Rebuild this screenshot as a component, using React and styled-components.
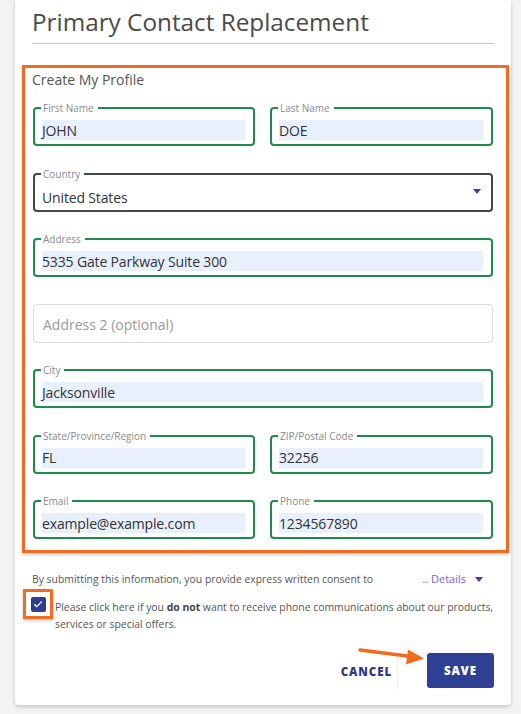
import React from 'react';
import styled, { createGlobalStyle } from 'styled-components';

const GlobalStyle = createGlobalStyle`
  html, body {
    margin: 0;
    padding: 0;
    background: #f3f3f3;
    font-family: "Open Sans", "Liberation Sans", sans-serif;
  }
`;

const Page = styled.div`
  width: 521px;
  height: 714px;
  overflow: hidden;
`;

const Card = styled.div`
  position: relative;
  margin-left: 15px;
  width: 496px;
  height: 705px;
  box-sizing: border-box;
  padding: 4px 17px 0;
  background: #fff;
  border-radius: 0 0 4px 4px;
  box-shadow: 0 2px 4px rgba(0, 0, 0, 0.18);
`;

const Title = styled.h1`
  margin: 0;
  font-size: 24.3px;
  font-weight: 400;
  line-height: 36px;
  color: #4a4a4a;
  padding-bottom: 3px;
  border-bottom: 1px solid #c8c8c8;
`;

const Highlight = styled.section`
  margin: 21px -15px 0 -10px;
  padding: 2px 13px 11px 8px;
  border: 3px solid #f36b21;
  box-shadow: 0 2px 3px rgba(0, 0, 0, 0.2);
`;

const SectionTitle = styled.div`
  font-size: 14px;
  line-height: 20px;
  color: #555;
  margin-bottom: 17px;
  margin-left: -1px;
`;

const Grid = styled.div`
  display: grid;
  grid-template-columns: 222px 223px;
  column-gap: 15px;
  row-gap: 26.5px;
`;

const Field = styled.div`
  position: relative;
  grid-column: ${p => (p.$full ? '1 / -1' : 'auto')};
  height: 39px;
  box-sizing: border-box;
  border: ${p =>
    p.$tone === 'dark' ? '2px solid #454545' : p.$tone === 'empty' ? '1px solid #dcdcdc' : '2px solid #1e8b4c'};
  border-radius: 4px;
  padding: ${p => (p.$tone === 'empty' ? '0 9px' : '11px 8px 4px 7px')};
  display: flex;
  align-items: ${p => (p.$tone === 'empty' ? 'center' : 'stretch')};
`;

const Label = styled.span`
  position: absolute;
  top: -8px;
  left: 6px;
  padding: 0 4px 0 2px;
  background: #fff;
  font-size: 10px;
  line-height: 14px;
  color: #8a8a8a;
`;

const Value = styled.div`
  flex: 1;
  display: flex;
  align-items: center;
  background: ${p => (p.$filled ? '#e8f0fe' : 'transparent')};
  font-size: 14px;
  letter-spacing: -0.15px;
  color: #333;
  padding-left: 0;
  margin-top: ${p => (p.$filled ? '0' : '3px')};
`;

const Placeholder = styled.div`
  font-size: 14px;
  color: #9a9a9a;
  margin-top: 2px;
`;

const Caret = styled.span`
  position: absolute;
  right: 10px;
  top: 14px;
  width: 0;
  height: 0;
  border-left: 4.5px solid transparent;
  border-right: 4.5px solid transparent;
  border-top: 5px solid #4a3aa8;
`;

const ConsentRow = styled.div`
  display: flex;
  justify-content: space-between;
  align-items: center;
  margin-top: 18px;
  font-size: 10.4px;
  line-height: 16px;
  color: #555;
`;

const Details = styled.span`
  display: flex;
  align-items: center;
  gap: 9px;
  font-size: 11px;
  color: #7a5fd0;
  margin-right: 11px;
  &::after {
    content: '';
    border-left: 4.5px solid transparent;
    border-right: 4.5px solid transparent;
    border-top: 5px solid #4a3aa8;
  }
`;

const OptRow = styled.div`
  display: flex;
  align-items: flex-start;
  margin-top: 2px;
  margin-left: -9px;
`;

const BoxMark = styled.div`
  flex: none;
  width: 24px;
  height: 24px;
  border: 3px solid #f36b21;
  display: flex;
  align-items: center;
  justify-content: center;
  box-shadow: 0 2px 3px rgba(0, 0, 0, 0.2);
  margin-right: 2px;
`;

const Check = styled.div`
  width: 15px;
  height: 15px;
  border-radius: 2px;
  background: #2e3c92;
  display: flex;
  align-items: center;
  justify-content: center;
`;

const OptText = styled.p`
  margin: 10px 0 0;
  font-size: 10.4px;
  line-height: 17px;
  color: #555;
  b {
    font-weight: 700;
    color: #444;
  }
`;

const Actions = styled.div`
  position: relative;
  display: flex;
  justify-content: flex-end;
  align-items: center;
  margin-top: 18px;
`;

const CancelButton = styled.button`
  border: none;
  border-right: 1px solid #f0f0f0;
  background: transparent;
  font-family: inherit;
  font-size: 11.5px;
  font-weight: 800;
  letter-spacing: 0.9px;
  color: #2c3a8a;
  height: 35px;
  padding: 0 5px 0 0;
  margin-right: 29px;
  margin-top: 3px;
`;

const SaveButton = styled.button`
  width: 67px;
  height: 35px;
  border: none;
  border-radius: 3px;
  background: #2e3f94;
  color: #fff;
  font-family: inherit;
  font-size: 11.5px;
  font-weight: 800;
  letter-spacing: 0.9px;
`;

const Arrow = styled.svg`
  position: absolute;
  left: 325px;
  top: -3px;
  overflow: visible;
`;

const fields = [
  { label: 'First Name', value: 'JOHN' },
  { label: 'Last Name', value: 'DOE' },
  { label: 'Country', value: 'United States', full: true, tone: 'dark', select: true },
  { label: 'Address', value: '5335 Gate Parkway Suite 300', full: true },
  { placeholder: 'Address 2 (optional)', full: true, tone: 'empty' },
  { label: 'City', value: 'Jacksonville', full: true },
  { label: 'State/Province/Region', value: 'FL' },
  { label: 'ZIP/Postal Code', value: '32256' },
  { label: 'Email', value: 'example@example.com' },
  { label: 'Phone', value: '1234567890' }
];

const App = () => (
  <Page>
    <GlobalStyle />
    <Card>
      <Title>Primary Contact Replacement</Title>
      <Highlight>
        <SectionTitle>Create My Profile</SectionTitle>
        <Grid>
          {fields.map((f, i) => (
            <Field key={i} $full={f.full} $tone={f.tone}>
              {f.label && <Label>{f.label}</Label>}
              {f.placeholder ? (
                <Placeholder>{f.placeholder}</Placeholder>
              ) : (
                <Value $filled={!f.select}>{f.value}</Value>
              )}
              {f.select && <Caret />}
            </Field>
          ))}
        </Grid>
      </Highlight>
      <ConsentRow>
        <span>By submitting this information, you provide express written consent to</span>
        <Details>.. Details</Details>
      </ConsentRow>
      <OptRow>
        <BoxMark>
          <Check>
            <svg width="10" height="8" viewBox="0 0 10 8">
              <path d="M1.2 4.2 L3.8 6.6 L8.8 1.4" fill="none" stroke="#fff" strokeWidth="1.3" />
            </svg>
          </Check>
        </BoxMark>
        <OptText>
          Please click here if you <b>do not</b> want to receive phone communications about our products,
          services or special offers.
        </OptText>
      </OptRow>
      <Actions>
        <CancelButton>CANCEL</CancelButton>
        <SaveButton>SAVE</SaveButton>
        <Arrow width="70" height="20" viewBox="0 0 70 20">
          <path d="M3 2 L58 9" stroke="#f36b21" strokeWidth="3.5" strokeLinecap="round" fill="none" />
          <path d="M51 1.5 L67 10.5 L49 16.5 Z" fill="#f36b21" />
        </Arrow>
      </Actions>
    </Card>
  </Page>
);

export default App;
